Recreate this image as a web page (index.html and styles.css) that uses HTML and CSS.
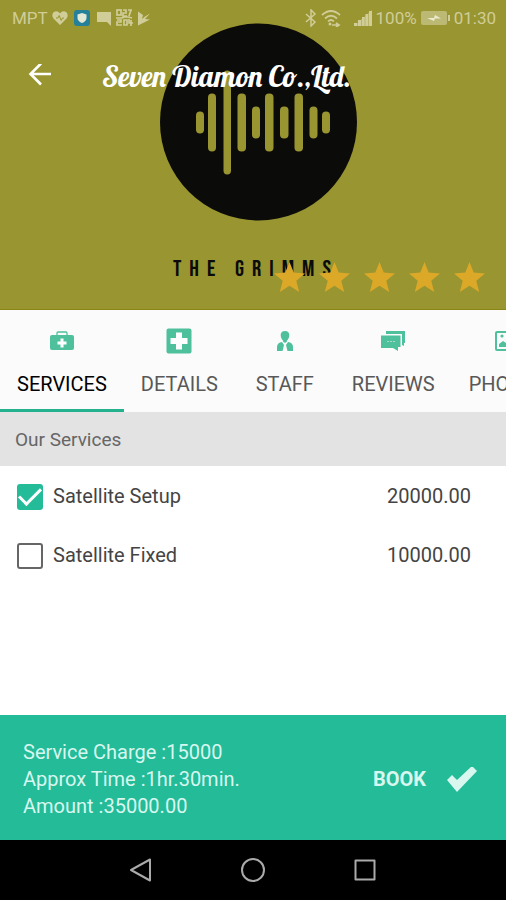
FILE: index.html
```html
<!DOCTYPE html>
<html lang="en">
<head>
<meta charset="utf-8">
<meta name="viewport" content="width=device-width, initial-scale=1">
<title>Seven Diamon Co.,Ltd.</title>
<link rel="stylesheet" href="styles.css">
</head>
<body>
<div class="app">
  <header class="hero">
    <svg class="hero-art" viewBox="0 0 506 310" preserveAspectRatio="xMidYMid slice">
      <circle cx="258.500" cy="122.500" r="98.500" fill="#0b0b0a"/>
      <g fill="#999531">
        <rect x="196" y="112" width="8" height="22" rx="4"/>
        <rect x="208" y="94" width="8" height="58" rx="4"/>
        <rect x="223.500" y="71" width="7.500" height="104" rx="3.700"/>
        <rect x="237.500" y="94" width="8.500" height="58" rx="4"/>
        <rect x="252" y="107" width="8" height="32" rx="4"/>
        <rect x="265" y="94" width="8.500" height="58" rx="4"/>
        <rect x="280" y="107" width="8.500" height="32" rx="4"/>
        <rect x="294.500" y="94" width="8.500" height="58" rx="4"/>
        <rect x="309.500" y="107" width="8" height="32" rx="4"/>
        <rect x="322" y="112" width="8" height="22" rx="4"/>
      </g>
      <text class="art-name" x="173" y="276">THE GRIMMS</text>
    </svg>

    <div class="status">
      <div class="status-group">
        <span>MPT</span>
        <svg width="16" height="16" viewBox="0 0 16 16"><path fill="currentColor" d="M8 15 1.500 8.500C-.8 6 .4 1.500 4 1.300 6 1.200 7.300 2.300 8 3.500c.7-1.200 2-2.300 4-2.200 3.600.2 4.800 4.700 2.500 7.200z"/><path fill="none" stroke="#999531" stroke-width="1" d="M4 8h2l1.200-2.500 2 5L10.500 8H12"/></svg>
        <svg class="shield" width="16" height="16" viewBox="0 0 16 16"><rect width="16" height="16" rx="3" fill="#25809a"/><path fill="#e3e7d3" d="M8 3 12.500 4.500V8c0 2.500-2 4-4.500 5-2.500-1-4.500-2.500-4.500-5V4.500z"/></svg>
        <svg width="16" height="16" viewBox="0 0 16 16"><path fill="currentColor" d="M1 2h14v14l-4-4H1z"/></svg>
        <svg width="17" height="18" viewBox="0 0 17 18"><g fill="none" stroke="currentColor" stroke-width="1.700"><rect x="1" y="1" width="4" height="5"/><path d="M7 1h3v3H7v3h4M12 1h4M15 1l-2 6M0 9h6l2-1h4l4 1M1 11h4v2H1v3h5M8 11h3v5H8zM13 10v4h4M15 11v6"/></g></svg>
        <svg width="14" height="16" viewBox="0 0 14 16"><path fill="currentColor" d="M1 1.500 6 5 5 9l3-2.500L13 3.500 8 9l5 .5-12 6z"/></svg>
      </div>
      <div class="status-group">
        <svg width="12" height="18" viewBox="0 0 12 18"><path fill="none" stroke="currentColor" stroke-width="1.500" d="m1 5 9 8-4 4V1l4 4-9 8"/></svg>
        <svg width="21" height="18" viewBox="0 0 21 18"><g fill="none" stroke="currentColor" stroke-width="1.700"><path d="M1 6q9-8 18 0M4 9.500q6-5.500 12 0M7 12.500q3-3 6 0"/><path d="M11 16h6m-2-2 3 2-3 2"/></g><circle cx="9" cy="15" r="1.500" fill="currentColor"/></svg>
        <svg class="signal" width="18" height="16" viewBox="0 0 18 16"><path fill="currentColor" opacity=".55" d="M0 16 18 0v16z"/><path fill="currentColor" d="M0 13h3v3H0zM4 10h3v6H4zM8 7h2.500v9H8zM11.500 4H14v12h-2.500zM15 1h3v15h-3z"/></svg>
        <span>100%</span>
        <svg width="29" height="14" viewBox="0 0 29 14"><rect width="26" height="14" rx="2" fill="currentColor" opacity=".65"/><path fill="currentColor" d="M27 4h2v6h-2z"/><path fill="#ecebd0" d="M6 7h7l1-3 6 3.500h-6L13 10z"/></svg>
        <span>01:30</span>
      </div>
    </div>

    <div class="toolbar">
      <button class="back" type="button" aria-label="Back">
        <svg width="24" height="24" viewBox="0 0 24 24"><path fill="none" stroke="currentColor" stroke-width="2.600" d="M23 10H3M13 -.5 2.500 10 13 20.500"/></svg>
      </button>
      <h1 class="title">Seven Diamon Co.,Ltd.</h1>
    </div>

    <div class="rating" role="img" aria-label="5 stars">
      <svg class="star" viewBox="0 0 31 30"><path d="m15.500 0 4.200 10.500L31 11.400l-8.700 7.300L25.200 30l-9.700-6.200L5.800 30l2.900-11.300L0 11.400l11.300-.9z"/></svg>
      <svg class="star" viewBox="0 0 31 30"><path d="m15.500 0 4.200 10.500L31 11.400l-8.700 7.300L25.200 30l-9.700-6.200L5.800 30l2.900-11.300L0 11.400l11.300-.9z"/></svg>
      <svg class="star" viewBox="0 0 31 30"><path d="m15.500 0 4.200 10.500L31 11.400l-8.700 7.300L25.200 30l-9.700-6.200L5.800 30l2.900-11.300L0 11.400l11.300-.9z"/></svg>
      <svg class="star" viewBox="0 0 31 30"><path d="m15.500 0 4.200 10.500L31 11.400l-8.700 7.300L25.200 30l-9.700-6.200L5.800 30l2.900-11.300L0 11.400l11.300-.9z"/></svg>
      <svg class="star" viewBox="0 0 31 30"><path d="m15.500 0 4.200 10.500L31 11.400l-8.700 7.300L25.200 30l-9.700-6.200L5.800 30l2.900-11.300L0 11.400l11.300-.9z"/></svg>
    </div>
  </header>

  <nav class="tabs">
    <a class="tab active" href="#services" aria-current="page">
      <svg class="tab-icon" viewBox="0 0 26 26"><path fill="none" stroke="currentColor" stroke-width="1.300" d="M8 8V5q0-1 1-1h8q1 0 1 1v3"/><rect x="1" y="7" width="24" height="15" rx="2" fill="currentColor"/><path fill="#fff" d="M11.500 10.500h3v3h3v3h-3v3h-3v-3h-3v-3h3z"/></svg>
      <span>SERVICES</span>
    </a>
    <a class="tab" href="#details">
      <svg class="tab-icon" viewBox="0 0 26 26"><rect x=".5" y=".5" width="25" height="25" rx="2" fill="currentColor"/><path fill="#fff" d="M10 4.500h6V10h5.500v6H16v5.500h-6V16H4.500v-6H10z"/></svg>
      <span>DETAILS</span>
    </a>
    <a class="tab" href="#staff">
      <svg class="tab-icon" viewBox="0 0 26 26"><path fill="currentColor" d="M13 3c3 0 4.500 2 4.300 4.500-.2 2.500-1.300 4-2.300 5v1l-2 1.500-2-1.500v-1c-1-1-2.100-2.500-2.300-5C8.500 5 10 3 13 3zM10 14l2 3-1.500 6H5v-4c0-3 2-4.500 5-5zM16 14l-2 3 1.500 6H21v-4c0-3-2-4.500-5-5z"/></svg>
      <span>STAFF</span>
    </a>
    <a class="tab" href="#reviews">
      <svg class="tab-icon" viewBox="0 0 26 26"><path fill="currentColor" d="M6 3h19v12h-1v3l-2-1V6H6z"/><path fill="currentColor" d="M1 7.500h19.500V19H18v4l-5-3H1z"/><path stroke="#a5dcc8" stroke-width="1.200" d="M7 13.500h2m1 0h2m1 0h2"/></svg>
      <span>REVIEWS</span>
    </a>
    <a class="tab" href="#photos">
      <svg class="tab-icon" viewBox="0 0 26 26"><rect x="1" y="4" width="24" height="18" rx="1" fill="none" stroke="currentColor" stroke-width="2"/><circle cx="7" cy="8" r="1.600" fill="currentColor"/><path fill="currentColor" d="M4 19v-3l4-3 3 2 5-5 6 6v3z"/></svg>
      <span>PHOTOS</span>
    </a>
  </nav>

  <main class="content" id="services">
    <h2 class="section-title">Our Services</h2>
    <ul class="services">
      <li class="service">
        <label class="choice"><input class="tick" type="checkbox" checked><span>Satellite Setup</span></label>
        <span>20000.00</span>
      </li>
      <li class="service">
        <label class="choice"><input class="tick" type="checkbox"><span>Satellite Fixed</span></label>
        <span>10000.00</span>
      </li>
    </ul>
  </main>

  <footer class="summary">
    <div class="totals">
      <div>Service Charge :15000</div>
      <div>Approx Time :1hr.30min.</div>
      <div>Amount :35000.00</div>
    </div>
    <button class="book" type="button">
      <span>BOOK</span>
      <svg width="30" height="26" viewBox="0 0 30 26"><path fill="currentColor" d="m0 13 5-5 5 5L25-1l5 5-20 21z"/></svg>
    </button>
  </footer>

  <div class="system-nav">
    <button class="system-key" type="button" aria-label="Back"><svg width="26" height="26" viewBox="0 0 26 26"><path d="M22 2.500v21L3 13z"/></svg></button>
    <button class="system-key" type="button" aria-label="Home"><svg width="26" height="26" viewBox="0 0 26 26"><circle cx="13" cy="13" r="11"/></svg></button>
    <button class="system-key" type="button" aria-label="Recent apps"><svg width="26" height="26" viewBox="0 0 26 26"><path d="M3.500 3.500h19v19h-19z"/></svg></button>
  </div>
</div>
</body>
</html>
```
FILE: styles.css
```css
* {
  box-sizing: border-box;
}

body {
  margin: 0;
  background: #fff;
  color: #444;
  font: 20px/27px Roboto, "Liberation Sans", sans-serif;
}

button {
  margin: 0;
  padding: 0;
  border: 0;
  background: none;
  color: inherit;
  font: inherit;
  cursor: pointer;
}

svg {
  display: block;
  flex: none;
}

.app {
  display: flex;
  flex-direction: column;
  min-height: 100vh;
}

.hero {
  position: relative;
  display: flex;
  flex-direction: column;
  min-height: 310px;
  background: #999531;
  border-bottom: 1px solid #8b8613;
}

.hero-art {
  position: absolute;
  inset: 0;
  width: 100%;
  height: 100%;
}

.art-name {
  fill: #0b0b0a;
  font: 23px "Bebas Neue", "Oswald", "Roboto Condensed", "Liberation Sans Narrow", "DejaVu Sans Condensed", sans-serif;
  letter-spacing: 8px;
}

.status,
.toolbar,
.rating {
  position: relative;
  display: flex;
  align-items: center;
}

.status {
  justify-content: space-between;
  height: 36px;
  padding: 0 10px 0 12px;
  color: #d0cd98;
  font-size: 17px;
}

.status-group {
  display: flex;
  align-items: center;
  gap: 4px;
}

.shield {
  margin: 0 2px;
}

.signal {
  margin-left: 8px;
}

.toolbar {
  gap: 50px;
  height: 80px;
  padding: 0 28px;
  color: #fff;
}

.title {
  margin: 0;
  font: 29px/32px Lobster, "Liberation Serif", serif;
  white-space: nowrap;
}

.rating {
  justify-content: flex-end;
  gap: 14px;
  margin-top: auto;
  padding: 0 21px 17px;
}

.star {
  width: 31px;
  height: 30px;
  fill: #dba828;
}

.tabs {
  display: flex;
  overflow-x: auto;
  scrollbar-width: none;
  background: #fbfbfb;
}

.tab {
  display: flex;
  flex: none;
  flex-direction: column;
  align-items: center;
  gap: 17px;
  min-width: 100px;
  padding: 18px 17px 11px;
  border-bottom: 3px solid transparent;
  color: #585858;
  text-decoration: none;
}

.tab.active {
  border-color: #23b18e;
  color: #000;
}

.tab-icon {
  width: 26px;
  height: 26px;
  color: #4fc09c;
}

.content {
  flex: 1;
}

.section-title {
  margin: 0;
  padding: 14px 15px 13px;
  background: #e3e3e3;
  color: #666;
  font: inherit;
  font-size: 19px;
}

.services {
  margin: 0;
  padding: 1px 0;
  list-style: none;
}

.service {
  display: flex;
  align-items: center;
  justify-content: space-between;
  height: 59px;
  padding: 0 35px 0 17px;
}

.choice {
  display: flex;
  align-items: center;
  gap: 10px;
}

.tick {
  width: 26px;
  height: 26px;
  margin: 0;
  appearance: none;
  border: 2px solid #666;
  border-radius: 3px;
}

.tick:checked {
  display: grid;
  place-items: center;
  border-color: #23bb98;
  background: #23bb98;
}

.tick:checked::before {
  content: "";
  width: 19px;
  height: 9px;
  border: solid #fff;
  border-width: 0 0 3px 3px;
  transform: translateY(-3px) rotate(-45deg);
}

.summary {
  display: flex;
  align-items: center;
  justify-content: space-between;
  padding: 24px 29px 20px 23px;
  background: #23bb98;
  color: #d8f7ef;
}

.book {
  display: flex;
  align-items: center;
  gap: 21px;
  font-weight: 700;
}

.system-nav {
  display: flex;
  justify-content: center;
  gap: 86px;
  height: 60px;
  background: #000;
}

.system-key {
  display: flex;
  align-items: center;
}

.system-key svg {
  fill: none;
  stroke: #aaa;
  stroke-width: 2;
  stroke-linejoin: round;
}
```
